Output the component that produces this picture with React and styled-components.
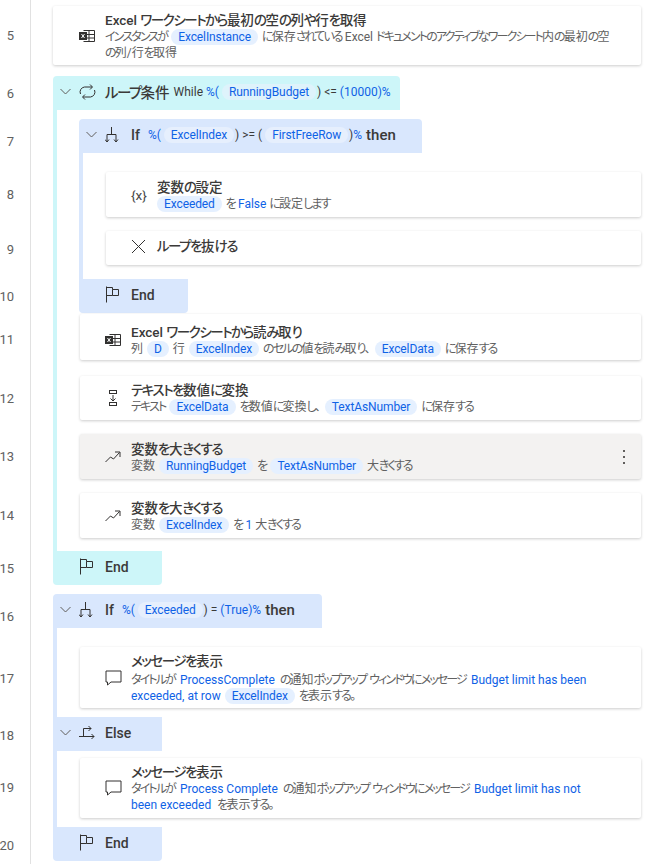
import React from 'react'
import styled, { createGlobalStyle } from 'styled-components'

const Global = createGlobalStyle`
html, body {
  margin: 0;
  height: 864px;
  overflow: hidden;
  background: #fff;
}
body {
  font-family: Roboto, "Noto Sans CJK JP", sans-serif;
  font-feature-settings: "palt";
  color: #3b3a39;
}
`;

const Page = styled.div`
  display: flex;
  height: 864px;
`;

const Gutter = styled.div`
  width: 30px;
  flex: none;
  border-right: 1px solid #e1e1e1;
`;

const LineNo = styled.div`
  height: ${p => p.$h}px;
  display: flex;
  align-items: center;
  justify-content: flex-end;
  padding-right: 16px;
  font-size: 13px;
  color: #616161;
`;

const Flow = styled.div`
  flex: 1;
  min-width: 0;
  padding: 6px 7px 0 22px;
`;

const Card = styled.div`
  display: flex;
  align-items: center;
  box-sizing: border-box;
  height: ${p => p.$h || 44}px;
  margin-top: ${p => p.$gap || 0}px;
  padding: ${p => p.$drop || 0}px 0 ${p => p.$lift || 0}px ${p => p.$pad || 25}px;
  background: ${p => (p.$active ? '#f3f2f1' : '#fff')};
  border-radius: 2px;
  box-shadow: 0 1px 3px rgba(0, 0, 0, 0.2);
`;

const IconSlot = styled.div`
  width: 26px;
  flex: none;
  display: flex;
  align-items: center;
  color: #323130;
  svg { display: block; }
`;

const VarIcon = styled.span`
  font-size: 13.5px;
  line-height: 16px;
  color: #4a4a4a;
`;

const Info = styled.div`
  flex: 1;
  min-width: 0;
  white-space: nowrap;
`;

const Kana = styled.span`
  letter-spacing: -0.11em;
`;

const Title = styled.div`
  font-size: 13.5px;
  font-weight: 500;
  line-height: 18px;
  color: #3b3a39;
`;

const Desc = styled.div`
  font-size: 12px;
  line-height: 16px;
  margin-top: ${p => p.$gap || 0}px;
  color: #616161;
  ${Kana} {
    letter-spacing: -0.155em;
  }
`;

const Pill = styled.span`
  display: inline-block;
  height: 16px;
  line-height: 16px;
  margin: 0 4px 0 ${p => (p.$flush ? 0 : 4)}px;
  padding: 0 7px;
  border-radius: 8px;
  background: ${p => p.$bg || '#e5f0ff'};
  color: #0f62e6;
  letter-spacing: -0.1px;
  vertical-align: top;
`;

const Val = styled.span`
  color: #0f62e6;
  margin: 0 ${p => p.$r || 0}px 0 ${p => p.$l || 0}px;
`;

const Kebab = styled.svg`
  flex: none;
  margin-right: 9px;
`;

const Head = styled.div`
  display: flex;
  align-items: center;
  width: ${p => p.$w}px;
  height: 34px;
  margin-top: ${p => p.$gap || 0}px;
  padding: 0 0 3px ${p => (p.$plain ? 26 : 7)}px;
  box-sizing: border-box;
  background: ${p => p.$color};
  border-radius: ${p => (p.$first ? '4px 4px 0 0' : p.$last ? '0 0 4px 4px' : '0')};
  white-space: nowrap;
`;

const Chevron = styled.svg`
  flex: none;
  width: 19px;
`;

const HeadName = styled.span`
  font-size: ${p => p.$size || 14}px;
  font-weight: 500;
  margin-right: ${p => p.$mr || 4}px;
  color: #3b3a39;
`;

const Cond = styled.span`
  font-size: 12px;
  line-height: 16px;
  color: #3b3a39;
  ${Pill} {
    margin: 0 1px 0 3px;
  }
`;

const Then = styled.span`
  font-size: 15px;
  font-weight: 500;
  margin-left: 4px;
  color: #3b3a39;
`;

const Block = styled.div`
  margin-top: ${p => p.$gap || 0}px;
`;

const Body = styled.div`
  border-left: 4px solid ${p => p.$color};
  padding: ${p => p.$top}px 0 ${p => p.$bottom}px 22px;
  & > ${Card} {
    margin-left: 1px;
  }
`;

// kana are set narrower than kanji in the original UI font
const J = ({ children }) =>
  children.split(/([\u3040-\u30ff]+)/).map((s, i) => (i % 2 ? <Kana key={i}>{s}</Kana> : s))

const ExcelIcon = () => (
  <svg width="16" height="14" viewBox="0 0 16 14" fill="none" stroke="currentColor" strokeWidth="1">
    <path d="M4.5 1.5H15.5V12.5H4.5M4.5 5.5H15.5M4.5 9H15.5M10 1.5V12.5" />
    <rect x="0" y="3" width="8" height="8" fill="currentColor" stroke="none" />
    <path d="M2.5 5L5.5 9M5.5 5L2.5 9" stroke="#fff" />
  </svg>
)

const LoopIcon = () => (
  <svg width="17" height="16" viewBox="0 0 17 16" fill="none" stroke="currentColor" strokeWidth="1">
    <path d="M1.5 10A5 5 0 0 1 5.5 3H13M11 0.5L13.5 3L11 5.5" />
    <path d="M15.5 6A5 5 0 0 1 11.5 13H4M6 10.5L3.5 13L6 15.5" />
  </svg>
)

const IfIcon = () => (
  <svg width="14" height="16" viewBox="0 0 14 16" fill="none" stroke="currentColor" strokeWidth="1">
    <path d="M6.5 0V7M2 15V7.5H11V15" />
    <path d="M0 12.5L2 15L4 12.5M9 12.5L11 15L13 12.5" />
  </svg>
)

const ElseIcon = () => (
  <svg width="16" height="14" viewBox="0 0 16 14" fill="none" stroke="currentColor" strokeWidth="1">
    <path d="M0 10.5H15M12.5 8L15 10.5L12.5 13" />
    <path d="M4.5 10.5V2.5H12M9.5 0L12 2.5L9.5 5" />
  </svg>
)

const FlagIcon = () => (
  <svg width="14" height="17" viewBox="0 0 14 17" fill="none" stroke="currentColor" strokeWidth="1">
    <path d="M1.5 0.5V16.5M1.5 1.5H7.5V3.5H13.5V9.5H7.5M1.5 9.5H7.5V3.5" />
  </svg>
)

const CloseIcon = () => (
  <svg width="15" height="15" viewBox="0 0 15 15" fill="none" stroke="currentColor" strokeWidth="1">
    <path d="M1 1L14 14M14 1L1 14" />
  </svg>
)

const ConvertIcon = () => (
  <svg width="16" height="16" viewBox="0 0 16 16" fill="none" stroke="currentColor" strokeWidth="1">
    <rect x="4.5" y="0.5" width="7" height="3" />
    <rect x="4.5" y="12.5" width="7" height="3" />
    <path d="M8 5V11M5.5 8.5L8 11L10.5 8.5" />
  </svg>
)

const TrendIcon = () => (
  <svg width="16" height="12" viewBox="0 0 16 12" fill="none" stroke="currentColor" strokeWidth="1">
    <path d="M0.5 11L5.5 6L8.5 8L14.5 1.5M10 1H15V6" />
  </svg>
)

const MessageIcon = () => (
  <svg width="17" height="16" viewBox="0 0 17 16" fill="none" stroke="currentColor" strokeWidth="1">
    <path d="M1 1H16V12H6L2.5 15V12H1Z" />
  </svg>
)

const Caret = () => (
  <Chevron height="8" viewBox="0 0 19 8" fill="none" stroke="#605e5c" strokeWidth="1">
    <path d="M0.5 1L5.5 6L10.5 1" />
  </Chevron>
)

const lines = [
  [5, 71], [6, 44], [7, 52], [8, 55], [9, 54], [10, 41], [11, 44], [12, 74],
  [13, 42], [14, 76], [15, 30], [16, 66], [17, 58], [18, 56], [19, 48], [20, 68],
]

const CYAN = '#cdf6f9'
const BLUE = '#d9e7fd'

const App = () => {
  return (
    <Page>
      <Global />
      <Gutter>
        {lines.map(([n, h]) => <LineNo key={n} $h={h}>{n}</LineNo>)}
      </Gutter>
      <Flow>
        <Card $h={59} $pad={26}>
          <IconSlot><ExcelIcon /></IconSlot>
          <Info>
            <Title><J>Excel ワークシートから最初の空の列や行を取得</J></Title>
            <Desc>
              <J>インスタンスが</J><Pill>ExcelInstance</Pill><J>に保存されている Excel ドキュメントのアクティブなワークシート内の最初の空</J><br />
              <J>の列/行を取得</J>
            </Desc>
          </Info>
        </Card>

        <Block $gap={11}>
          <Head $w={347} $color={CYAN} $first>
            <Caret />
            <IconSlot><LoopIcon /></IconSlot>
            <HeadName $size={14.5}><J>ループ条件</J></HeadName>
            <Cond>
              While <Val>%(</Val><Pill $bg="#def3fb">RunningBudget</Pill>) &lt;= <Val>(10000)%</Val>
            </Cond>
          </Head>
          <Body $color={CYAN} $top={9} $bottom={13}>
            <Block>
              <Head $w={343} $color={BLUE} $first>
                <Caret />
                <IconSlot><IfIcon /></IconSlot>
                <HeadName $mr={8}>If</HeadName>
                <Cond>
                  <Val>%(</Val><Pill $bg="#e6effd">ExcelIndex</Pill>) &gt;= (<Pill $bg="#e6effd">FirstFreeRow</Pill>)<Val>%</Val>
                </Cond>
                <Then>then</Then>
              </Head>
              <Body $color={BLUE} $top={19} $bottom={14}>
                <Card $h={45}>
                  <IconSlot><VarIcon>{'{x}'}</VarIcon></IconSlot>
                  <Info>
                    <Title><J>変数の設定</J></Title>
                    <Desc><Pill $flush>Exceeded</Pill><J>を</J> <Val>False</Val> <J>に設定します</J></Desc>
                  </Info>
                </Card>
                <Card $h={34} $gap={14} $lift={4}>
                  <IconSlot><CloseIcon /></IconSlot>
                  <Info><Title><J>ループを抜ける</J></Title></Info>
                </Card>
              </Body>
              <Head $w={109} $color={BLUE} $last $plain>
                <IconSlot><FlagIcon /></IconSlot>
                <HeadName>End</HeadName>
              </Head>
            </Block>

            <Card $h={46} $gap={1} $drop={6}>
              <IconSlot><ExcelIcon /></IconSlot>
              <Info>
                <Title><J>Excel ワークシートから読み取り</J></Title>
                <Desc><J>列</J><Pill>D</Pill><J>行</J><Pill>ExcelIndex</Pill><J>のセルの値を読み取り、</J><Pill>ExcelData</Pill><J>に保存する</J></Desc>
              </Info>
            </Card>
            <Card $gap={16}>
              <IconSlot><ConvertIcon /></IconSlot>
              <Info>
                <Title><J>テキストを数値に変換</J></Title>
                <Desc><J>テキスト</J><Pill>ExcelData</Pill><J>を数値に変換し、</J><Pill>TextAsNumber</Pill><J>に保存する</J></Desc>
              </Info>
            </Card>
            <Card $h={45} $gap={14} $active>
              <IconSlot><TrendIcon /></IconSlot>
              <Info>
                <Title><J>変数を大きくする</J></Title>
                <Desc><J>変数</J><Pill>RunningBudget</Pill><J>を</J><Pill>TextAsNumber</Pill><J>大きくする</J></Desc>
              </Info>
              <Kebab width="16" height="16" viewBox="0 0 16 16" fill="#605e5c">
                <rect x="7" y="1" width="2" height="2" />
                <rect x="7" y="7" width="2" height="2" />
                <rect x="7" y="13" width="2" height="2" />
              </Kebab>
            </Card>
            <Card $h={45} $gap={14}>
              <IconSlot><TrendIcon /></IconSlot>
              <Info>
                <Title><J>変数を大きくする</J></Title>
                <Desc><J>変数</J><Pill>ExcelIndex</Pill><J>を</J> <Val>1</Val> <J>大きくする</J></Desc>
              </Info>
            </Card>
          </Body>
          <Head $w={109} $color={CYAN} $last $plain>
            <IconSlot><FlagIcon /></IconSlot>
            <HeadName>End</HeadName>
          </Head>
        </Block>

        <Block $gap={9}>
          <Head $w={269} $color={BLUE} $first>
            <Caret />
            <IconSlot><IfIcon /></IconSlot>
            <HeadName $mr={8}>If</HeadName>
            <Cond>
              <Val>%(</Val><Pill $bg="#e6effd">Exceeded</Pill>) = <Val>(True)%</Val>
            </Cond>
            <Then>then</Then>
          </Head>
          <Body $color={BLUE} $top={19} $bottom={9}>
            <Card $h={61}>
              <IconSlot><MessageIcon /></IconSlot>
              <Info>
                <Title><J>メッセージを表示</J></Title>
                <Desc $gap={2}>
                  <J>タイトルが</J><Val $l={5} $r={5}>ProcessComplete</Val><J>の通知ポップアップ ウィンドウにメッセージ</J><Val $l={5} $r={5}>Budget limit has been</Val><br />
                  <Val>exceeded, at row</Val><Pill>ExcelIndex</Pill><J>を表示する。</J>
                </Desc>
              </Info>
            </Card>
          </Body>
          <Head $w={109} $color={BLUE}>
            <Caret />
            <IconSlot><ElseIcon /></IconSlot>
            <HeadName>Else</HeadName>
          </Head>
          <Body $color={BLUE} $top={7} $bottom={9}>
            <Card $h={60}>
              <IconSlot><MessageIcon /></IconSlot>
              <Info>
                <Title><J>メッセージを表示</J></Title>
                <Desc>
                  <J>タイトルが</J><Val $l={5} $r={5}>Process Complete</Val><J>の通知ポップアップ ウィンドウにメッセージ</J><Val $l={5} $r={5}>Budget limit has not</Val><br />
                  <Val $r={6}>been exceeded</Val><J>を表示する。</J>
                </Desc>
              </Info>
            </Card>
          </Body>
          <Head $w={109} $color={BLUE} $last $plain>
            <IconSlot><FlagIcon /></IconSlot>
            <HeadName>End</HeadName>
          </Head>
        </Block>
      </Flow>
    </Page>
  )
}

export default App
